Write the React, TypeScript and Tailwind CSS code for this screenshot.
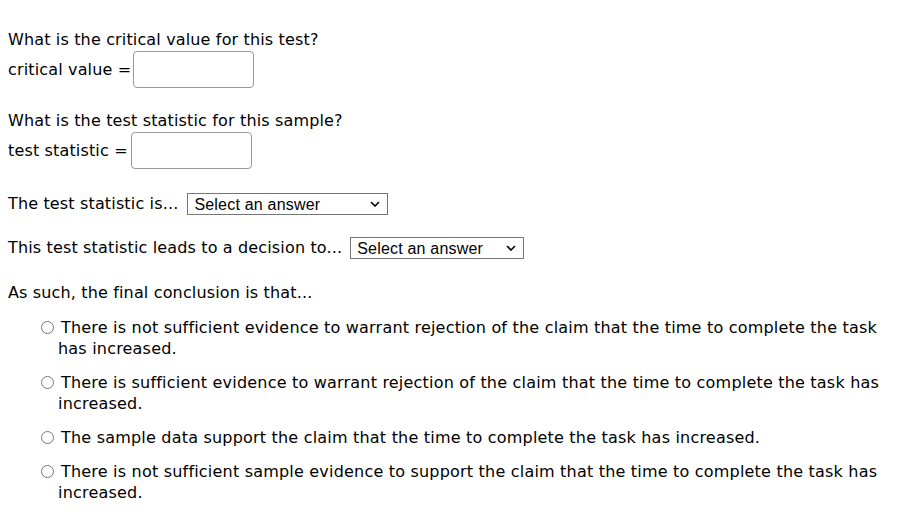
import React from "react";

const font = { fontFamily: '"DejaVu Sans", sans-serif' };

function Chevron() {
  return (
    <svg width="10" height="6" viewBox="0 0 10 6" className="absolute right-[7px] top-1/2 -translate-y-1/2">
      <path d="M1 1l4 4 4-4" fill="none" stroke="#000" strokeWidth="1.6" />
    </svg>
  );
}

function Select({ className }: { className: string }) {
  return (
    <span className={`relative inline-block h-[22px] shrink-0 border border-[#767676] bg-white ${className}`}>
      <span className="absolute left-[6px] top-[1px] text-[16px] leading-[19px] tracking-[0.2px] text-black" style={{ fontFamily: '"Liberation Sans", Arial, sans-serif' }}>
        Select an answer
      </span>
      <Chevron />
    </span>
  );
}

function Radio({ children }: { children: React.ReactNode }) {
  return (
    <div className="pl-[50px] -indent-[17px] leading-[21px] tracking-[0.2px]">
      <span className="mr-[7px] inline-block h-[13px] w-[13px] rounded-full border border-[#767676] bg-white align-[-1px]" />
      {children}
    </div>
  );
}

export default function App() {
  return (
    <div className="bg-white px-2 pt-[29px] text-[16px] tracking-[0.15px] text-black" style={font}>
      <p className="leading-[22px]">What is the critical value for this test?</p>
      <div className="flex h-[37px] items-center">
        <span>critical value =</span>
        <span className="ml-[2px] h-[37px] w-[121px] shrink-0 rounded-[4px] border border-[#999]" />
      </div>

      <p className="mt-[22px] leading-[22px]">What is the test statistic for this sample?</p>
      <div className="flex h-[37px] items-center">
        <span>test statistic =</span>
        <span className="ml-[3px] h-[37px] w-[121px] shrink-0 rounded-[4px] border border-[#999]" />
      </div>

      <div className="mt-[24px] flex h-[22px] items-center">
        <span>The test statistic is...</span>
        <Select className="ml-[9px] w-[201px]" />
      </div>

      <div className="mt-[22px] flex h-[22px] items-center">
        <span>This test statistic leads to a decision to...</span>
        <Select className="ml-[8px] w-[174px]" />
      </div>

      <p className="mt-[23px] leading-[22px]">As such, the final conclusion is that...</p>

      <div className="mt-[13px] flex flex-col gap-[13px]">
        <Radio>
          There is not sufficient evidence to warrant rejection of the claim that the time to complete the task has increased.
        </Radio>
        <Radio>
          There is sufficient evidence to warrant rejection of the claim that the time to complete the task has increased.
        </Radio>
        <Radio>The sample data support the claim that the time to complete the task has increased.</Radio>
        <Radio>
          There is not sufficient sample evidence to support the claim that the time to complete the task has increased.
        </Radio>
      </div>
    </div>
  );
}
